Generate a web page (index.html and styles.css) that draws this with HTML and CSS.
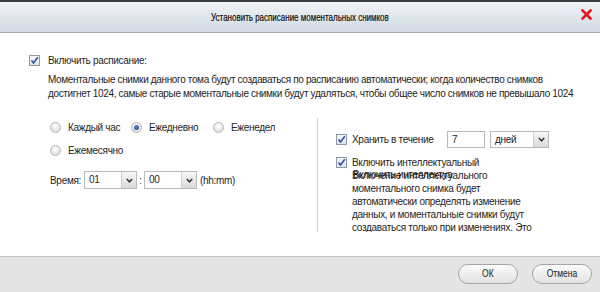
FILE: index.html
```html
<!DOCTYPE html>
<html>
<head>
<meta charset="utf-8">
<link rel="stylesheet" href="styles.css">
</head>
<body>
<div class="dialog">
  <div class="titlebar">
    <span class="title">Установить расписание моментальных снимков</span>
    <span class="close">
      <svg width="11" height="11" viewBox="0 0 11 11"><path d="M1.5 1.5 L9.5 9.5 M9.5 1.5 L1.5 9.5" stroke="#e8141b" stroke-width="2.6" stroke-linecap="square"/></svg>
    </span>
  </div>
  <div class="content">
    <div class="check-row">
      <span class="checkbox"><svg width="9" height="9" viewBox="0 0 9 9"><path d="M1.5 4.5 L3.5 7 L7.8 1.2" fill="none" stroke="#2b4fa8" stroke-width="1.6"/></svg></span>
      <span class="label">Включить расписание:</span>
    </div>
    <div class="desc">Моментальные снимки данного тома будут создаваться по расписанию автоматически; когда количество снимков<br>достигнет 1024, самые старые моментальные снимки будут удаляться, чтобы общее число снимков не превышало 1024</div>
    <div class="options">
      <div class="left">
        <div class="radio-row">
          <label class="radio-item"><span class="radio"></span>Каждый час</label>
          <label class="radio-item"><span class="radio on"></span>Ежедневно</label>
          <label class="radio-item"><span class="radio"></span>Еженедельно</label>
        </div>
        <div class="radio-row second">
          <label class="radio-item"><span class="radio"></span>Ежемесячно</label>
        </div>
        <div class="time-row">
          <span class="time-label">Время:</span>
          <span class="select sel-time"><span class="val">01</span><span class="arrow"><svg width="7" height="5" viewBox="0 0 7 5"><path d="M0.8 1 L3.5 3.8 L6.2 1" fill="none" stroke="#333" stroke-width="1.5"/></svg></span></span>
          <span class="colon">:</span>
          <span class="select sel-time"><span class="val">00</span><span class="arrow"><svg width="7" height="5" viewBox="0 0 7 5"><path d="M0.8 1 L3.5 3.8 L6.2 1" fill="none" stroke="#333" stroke-width="1.5"/></svg></span></span>
          <span class="hint">(hh:mm)</span>
        </div>
      </div>
      <div class="right">
        <div class="keep-row">
          <span class="checkbox"><svg width="9" height="9" viewBox="0 0 9 9"><path d="M1.5 4.5 L3.5 7 L7.8 1.2" fill="none" stroke="#2b4fa8" stroke-width="1.6"/></svg></span>
          <span class="keep-label">Хранить в течение</span>
          <span class="input">7</span>
          <span class="select sel-unit"><span class="val">дней</span><span class="arrow"><svg width="7" height="5" viewBox="0 0 7 5"><path d="M0.8 1 L3.5 3.8 L6.2 1" fill="none" stroke="#333" stroke-width="1.5"/></svg></span></span>
        </div>
        <div class="smart-row">
          <span class="checkbox"><svg width="9" height="9" viewBox="0 0 9 9"><path d="M1.5 4.5 L3.5 7 L7.8 1.2" fill="none" stroke="#2b4fa8" stroke-width="1.6"/></svg></span>
          <div class="smart-text">
            <div>Включить интеллектуальный</div>
            <div class="overlap"><span>Включение интеллектуального</span><span class="ghost">Включить интеллектуа</span></div>
            <div>моментального снимка будет</div>
            <div>автоматически определять изменение</div>
            <div>данных, и моментальные снимки будут</div>
            <div>создаваться только при изменениях. Это</div>
            <div>позволит сэкономить место на диске.</div>
          </div>
        </div>
      </div>
    </div>
  </div>
  <div class="footer">
    <button class="btn"><span class="btn-text">ОК</span></button>
    <button class="btn"><span class="btn-text">Отмена</span></button>
  </div>
</div>
</body>
</html>
```
FILE: styles.css
```css
* { box-sizing: border-box; }
html, body { margin: 0; padding: 0; }
body {
  width: 600px;
  height: 292px;
  overflow: hidden;
  background: #fff;
  font-family: "Liberation Sans", Arial, sans-serif;
  font-size: 10px;
  letter-spacing: -0.3px;
  color: #1e1e1e;
}
.dialog {
  width: 600px;
  height: 292px;
  display: flex;
  flex-direction: column;
}
.titlebar {
  height: 33px;
  flex: none;
  border-top: 2px solid #3d3d3d;
  border-bottom: 1px solid #a3a7ac;
  background: linear-gradient(#f2f5f8, #dde3ea 60%, #d3dae2);
  display: flex;
  align-items: center;
  justify-content: center;
  position: relative;
}
.title {
  display: inline-block;
  font-size: 10.5px;
  letter-spacing: 0;
  color: #111;
  transform: scaleX(0.76);
  white-space: nowrap;
  -webkit-text-stroke: 0.2px #111;
}
.close {
  position: absolute;
  right: 8px;
  top: 7px;
  width: 11px;
  height: 11px;
  display: flex;
}
.content {
  flex: 1;
  padding: 20px 0 0 29px;
  overflow: hidden;
}
.check-row {
  display: flex;
  align-items: center;
  height: 14px;
}
.checkbox {
  width: 11px;
  height: 11px;
  flex: none;
  border: 1px solid #8c99a6;
  background: linear-gradient(#f4f6f8, #dfe4ea);
  display: flex;
  align-items: center;
  justify-content: center;
}
.check-row .label { margin-left: 8px; }
.desc {
  margin: 6px 0 0 19px;
  line-height: 14px;
  white-space: nowrap;
  letter-spacing: -0.35px;
}
.options {
  display: flex;
  margin-top: 17px;
  height: 114px;
}
.left {
  width: 288px;
  flex: none;
  padding-left: 21px;
}
.radio-row {
  display: grid;
  grid-template-columns: 81px 82px 62px;
  width: 225px;
  height: 18px;
  overflow: hidden;
}
.radio-row.second { margin-top: 5px; }
.radio-item {
  display: flex;
  align-items: center;
  white-space: nowrap;
  overflow: hidden;
}
.radio {
  width: 11px;
  height: 11px;
  flex: none;
  border-radius: 50%;
  border: 1px solid #b4b4b4;
  background: radial-gradient(circle at 50% 35%, #ffffff, #d6d6d6);
  margin-right: 7px;
  display: flex;
  align-items: center;
  justify-content: center;
}
.radio.on::after {
  content: "";
  width: 5px;
  height: 5px;
  border-radius: 50%;
  background: radial-gradient(circle at 40% 35%, #5a8ad0, #163f80);
}
.time-row {
  display: flex;
  align-items: center;
  margin-top: 12px;
  height: 18px;
}
.time-label { width: 34px; }
.select {
  display: flex;
  height: 18px;
  border: 1px solid #b9b9b9;
  background: #fff;
}
.select .val {
  flex: 1;
  padding-left: 4px;
  line-height: 16px;
}
.select .arrow {
  width: 15px;
  border-left: 1px solid #cfcfcf;
  background: linear-gradient(#f8f8f8, #dadada);
  display: flex;
  align-items: center;
  justify-content: center;
}
.sel-time { width: 53px; }
.colon { width: 5px; text-align: center; margin: 0 1px; color: #555; }
.hint { margin-left: 3px; }
.right {
  flex: 1;
  border-left: 1px solid #d2d2d2;
  padding: 13px 0 0 18px;
  overflow: hidden;
}
.keep-row {
  display: flex;
  align-items: center;
  height: 17px;
}
.keep-label { margin-left: 5px; width: 95px; white-space: nowrap; }
.input {
  width: 38px;
  height: 17px;
  border: 1px solid #b9b9b9;
  padding-left: 4px;
  line-height: 15px;
}
.sel-unit { width: 59px; height: 17px; margin-left: 5px; }
.sel-unit .val { line-height: 15px; }
.smart-row {
  display: flex;
  align-items: flex-start;
  margin-top: 8px;
}
.smart-row .checkbox { margin-top: 1px; }
.smart-text {
  margin-left: 5px;
  line-height: 13px;
  white-space: nowrap;
}
.overlap { position: relative; }
.overlap .ghost {
  position: absolute;
  left: 1px;
  top: -1px;
}
.footer {
  height: 36px;
  flex: none;
  border-top: 1px solid #c6c6c6;
  background: #e4e4e4;
  display: flex;
  align-items: center;
  justify-content: flex-end;
  gap: 14px;
  padding-right: 8px;
  padding-bottom: 2px;
}
.btn {
  width: 60px;
  height: 20px;
  border-radius: 10px;
  border: 1px solid #a6a6a6;
  background: linear-gradient(#fbfbfb, #e2e2e2);
  font-family: "Liberation Sans", Arial, sans-serif;
  font-size: 10px;
  color: #222;
  padding: 0;
}
.btn-text {
  display: inline-block;
  transform: scaleX(0.85);
}
```
